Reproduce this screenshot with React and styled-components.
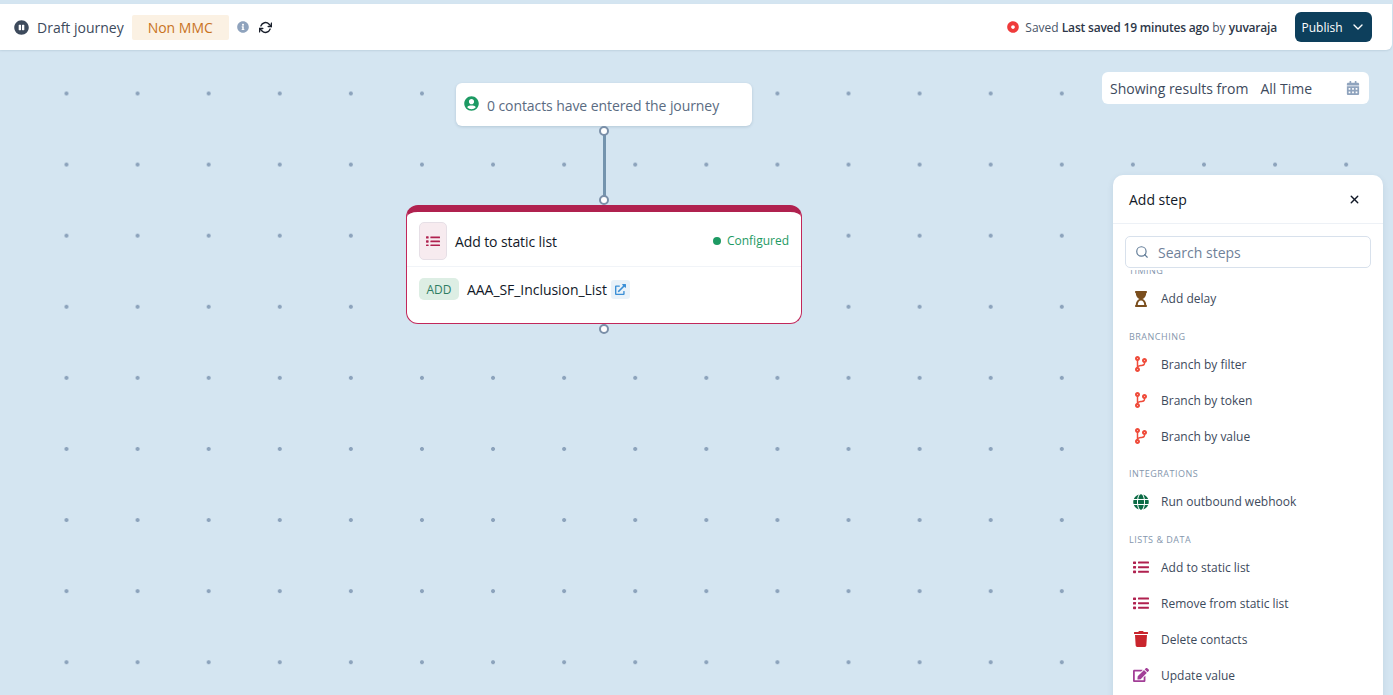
import React from 'react'
import styled, { createGlobalStyle } from 'styled-components'
import { FaPauseCircle, FaInfoCircle, FaDotCircle, FaUserCircle, FaCalendarAlt, FaHourglassStart, FaCodeBranch, FaGlobe, FaTrash, FaEdit, FaExternalLinkAlt } from 'react-icons/fa'
import { FiRefreshCw, FiSearch, FiX, FiChevronDown } from 'react-icons/fi'

const Global = createGlobalStyle`
html,body{
    margin:0;
    height:100%;
    overflow:hidden;
}
body{
    font-family:"Open Sans","Noto Sans",sans-serif;
    background:#D4E5F1;
}
`
const Page = styled.div`
    width:1393px;
    height:695px;
    padding-top:4px;
    box-sizing:border-box;
    display:flex;
    flex-direction:column;
    overflow:hidden;
    background:#D4E5F1;
`
const Header = styled.header`
    height:46px;
    width:1392px;
    flex:none;
    box-sizing:border-box;
    background:#fff;
    border-radius:0 0 6px 0;
    box-shadow:0 1px 2px rgba(40,70,100,.12);
    display:flex;
    align-items:center;
    padding:0 20px 0 14px;
    position:relative;
    z-index:2;
`
const PauseIcon = styled(FaPauseCircle)`
    font-size:15px;
    color:#3D4A5C;
    margin-right:8px;
`
const Title = styled.span`
    font-size:14px;
    color:#3D4A5C;
    margin-right:8px;
`
const Badge = styled.span`
    width:97px;
    height:25px;
    display:flex;
    align-items:center;
    justify-content:center;
    background:#FBF1E3;
    color:#C9731E;
    font-size:14px;
    border-radius:2px;
    margin-right:8px;
`
const InfoIcon = styled(FaInfoCircle)`
    font-size:12px;
    color:#8FA3BD;
    margin:0 10px 0 0;
`
const SyncIcon = styled(FiRefreshCw)`
    font-size:13px;
    stroke-width:2.7;
    color:#1A202C;
`
const Status = styled.div`
    margin-left:auto;
    display:flex;
    align-items:center;
    font-size:12px;
    color:#4A5568;
    white-space:pre;
    b{
        font-weight:600;
        color:#2D3748;
        letter-spacing:-.2px;
    }
`
const SavedIcon = styled(FaDotCircle)`
    font-size:12px;
    color:#EF3B3B;
    margin-right:6px;
`
const Publish = styled.button`
    width:77px;
    height:30px;
    margin-left:18px;
    border:0;
    border-radius:6px;
    background:#0D3F5C;
    color:#fff;
    font:500 12px "Open Sans",sans-serif;
    display:flex;
    align-items:center;
    justify-content:center;
    gap:7px;
    svg{
        font-size:16px;
    }
`
const Canvas = styled.main`
    flex:1;
    position:relative;
    background-color:#D4E5F1;
    background-image:radial-gradient(circle at center,#8CA3BC 0,#8CA3BC 1.6px,transparent 2.3px);
    background-size:71.1px 71.1px;
    background-position:30.95px 7.95px;
`
const Results = styled.div`
    position:absolute;
    left:1102px;
    top:22px;
    width:267px;
    height:32px;
    box-sizing:border-box;
    padding:0 9px 0 8px;
    background:#fff;
    border-radius:6px;
    display:flex;
    align-items:center;
    font-size:14px;
    color:#3D4A5C;
    span+span{
        margin-left:12px;
    }
    svg{
        margin-left:auto;
        font-size:14px;
        color:#8FA3BD;
    }
`
const ContactNode = styled.div`
    position:absolute;
    left:456px;
    top:33px;
    width:296px;
    height:43px;
    box-sizing:border-box;
    padding:2px 8px 0;
    background:#fff;
    border-radius:6px;
    box-shadow:0 1px 3px rgba(40,70,100,.18);
    display:flex;
    align-items:center;
    gap:8px;
    font-size:14px;
    letter-spacing:-.08px;
    color:#5A6B82;
    svg{
        font-size:15px;
        color:#1D9A63;
        margin-top:-5px;
    }
`
const Handle = styled.div`
    position:absolute;
    left:599px;
    top:${p => p.$top}px;
    width:10px;
    height:10px;
    box-sizing:border-box;
    border:2px solid #7A8FA8;
    border-radius:50%;
    background:#fff;
    z-index:1;
`
const Edge = styled.div`
    position:absolute;
    left:602.5px;
    top:85px;
    width:3px;
    height:62px;
    background:#7494AE;
`
const StepNode = styled.section`
    position:absolute;
    left:406px;
    top:155px;
    width:396px;
    height:119px;
    box-sizing:border-box;
    background:#fff;
    border:1px solid #C2275A;
    border-top:7px solid #B0214F;
    border-radius:12px;
    overflow:hidden;
`
const NodeHead = styled.div`
    height:55px;
    box-sizing:border-box;
    padding:10px 12px 0;
    border-bottom:1px solid #F1F4F8;
    display:flex;
    align-items:flex-start;
`
const NodeIcon = styled.div`
    width:28px;
    height:38px;
    box-sizing:border-box;
    background:#F7EBEF;
    border:1px solid #E6DFE6;
    border-radius:5px;
    display:flex;
    align-items:center;
    justify-content:center;
    margin-right:8px;
`
const NodeTitle = styled.span`
    font-size:14px;
    font-weight:500;
    letter-spacing:-.1px;
    color:#111827;
    line-height:40px;
`
const Configured = styled.span`
    margin-left:auto;
    font-size:12px;
    color:#1D9A63;
    line-height:38px;
    display:flex;
    align-items:center;
    gap:6px;
    &::before{
        content:"";
        width:8px;
        height:8px;
        border-radius:50%;
        background:#1D9A63;
    }
`
const NodeBody = styled.div`
    padding:11px 12px 0;
    display:flex;
    align-items:center;
`
const Pill = styled.span`
    width:40px;
    height:22px;
    background:#DDEEE4;
    color:#2E7D62;
    font-size:12px;
    border-radius:5px;
    display:flex;
    align-items:center;
    justify-content:center;
    margin-right:8px;
`
const ListName = styled.span`
    font-size:14px;
    font-weight:500;
    letter-spacing:-.05px;
    color:#111827;
    margin-right:4px;
    padding-top:1px;
`
const LinkBox = styled.span`
    width:19px;
    height:19px;
    background:#E9F2F9;
    border-radius:3px;
    display:flex;
    align-items:center;
    justify-content:center;
    color:#3B8FD6;
    font-size:11px;
`
const Panel = styled.aside`
    position:absolute;
    left:1113px;
    top:125px;
    width:270px;
    height:540px;
    background:#fff;
    border-radius:10px;
    box-shadow:0 2px 6px rgba(40,70,100,.1);
    display:flex;
    flex-direction:column;
    z-index:2;
`
const PanelHead = styled.div`
    height:49px;
    flex:none;
    box-sizing:border-box;
    border-bottom:1px solid #EDF1F6;
    padding:0 22px 0 16px;
    display:flex;
    align-items:center;
    justify-content:space-between;
    font-size:14px;
    font-weight:500;
    color:#111827;
    svg{
        font-size:13px;
        stroke-width:2.5;
    }
`
const Search = styled.div`
    margin:12px 12px 0 12px;
    height:32px;
    flex:none;
    box-sizing:border-box;
    border:1px solid #D8E1EC;
    border-radius:5px;
    display:flex;
    align-items:center;
    gap:9px;
    padding:0 9px;
    font-size:14px;
    color:#6F8199;
    svg{
        font-size:14px;
        color:#5F7A96;
    }
`
const StepScroll = styled.div`
    flex:1;
    margin-top:2px;
    overflow:hidden;
`
const StepList = styled.div`
    margin-top:-19px;
`
const GroupLabel = styled.div`
    height:29.6px;
    box-sizing:border-box;
    padding:14px 0 0 16px;
    font-size:9px;
    line-height:12px;
    letter-spacing:.5px;
    font-weight:500;
    color:#8496AD;
    text-transform:uppercase;
`
const Step = styled.div`
    height:36px;
    display:flex;
    align-items:center;
    padding-left:19px;
    font-size:12px;
    color:#3D4A5C;
`
const StepIcon = styled.span`
    width:18px;
    display:flex;
    justify-content:center;
    margin-right:11px;
    font-size:${p => p.$size || 16}px;
    color:${p => p.$color};
`
const ListSvg = styled.svg`
    display:block;
`

// font-awesome's list has round bullets, the one in the picture is small dashes and thick bars
const ListIcon = ({ width = 16, color = '#B0214F' }) => (
    <ListSvg width={width} height={width * 0.78} viewBox="0 0 16 12.5" fill={color}>
        <rect x="0" y="0.4" width="3" height="2.6" rx="0.6" />
        <rect x="0" y="5" width="3" height="2.6" rx="0.6" />
        <rect x="0" y="9.6" width="3" height="2.6" rx="0.6" />
        <rect x="5" y="0.6" width="11" height="2" rx="0.4" />
        <rect x="5" y="5.2" width="11" height="2" rx="0.4" />
        <rect x="5" y="9.8" width="11" height="2" rx="0.4" />
    </ListSvg>
)

const groups = [
    { label: 'Timing', steps: [{ name: 'Add delay', icon: FaHourglassStart, color: '#7A4E1D', size: 16 }] },
    {
        label: 'Branching', steps: [
            { name: 'Branch by filter', icon: FaCodeBranch, color: '#EF4B3A', size: 16 },
            { name: 'Branch by token', icon: FaCodeBranch, color: '#EF4B3A', size: 16 },
            { name: 'Branch by value', icon: FaCodeBranch, color: '#EF4B3A', size: 16 },
        ]
    },
    { label: 'Integrations', steps: [{ name: 'Run outbound webhook', icon: FaGlobe, color: '#0B6B45', size: 16 }] },
    {
        label: 'Lists & data', steps: [
            { name: 'Add to static list', icon: ListIcon, color: '#B0214F' },
            { name: 'Remove from static list', icon: ListIcon, color: '#B0214F' },
            { name: 'Delete contacts', icon: FaTrash, color: '#C9252D', size: 16 },
            { name: 'Update value', icon: FaEdit, color: '#A23E97', size: 16 },
        ]
    },
]

function App() {
    return (
        <Page>
            <Global />
            <Header>
                <PauseIcon />
                <Title>Draft journey</Title>
                <Badge>Non MMC</Badge>
                <InfoIcon />
                <SyncIcon />
                <Status>
                    <SavedIcon />
                    Saved <b>Last saved 19 minutes ago</b> by <b>yuvaraja</b>
                </Status>
                <Publish>Publish <FiChevronDown /></Publish>
            </Header>
            <Canvas>
                <Results>
                    <span>Showing results from</span>
                    <span>All Time</span>
                    <FaCalendarAlt />
                </Results>
                <ContactNode>
                    <FaUserCircle />
                    0 contacts have entered the journey
                </ContactNode>
                <Handle $top={76} />
                <Edge />
                <Handle $top={145} />
                <StepNode>
                    <NodeHead>
                        <NodeIcon><ListIcon width={14} /></NodeIcon>
                        <NodeTitle>Add to static list</NodeTitle>
                        <Configured>Configured</Configured>
                    </NodeHead>
                    <NodeBody>
                        <Pill>ADD</Pill>
                        <ListName>AAA_SF_Inclusion_List</ListName>
                        <LinkBox><FaExternalLinkAlt /></LinkBox>
                    </NodeBody>
                </StepNode>
                <Handle $top={274} />
                <Panel>
                    <PanelHead>Add step <FiX /></PanelHead>
                    <Search><FiSearch /> Search steps</Search>
                    <StepScroll>
                        <StepList>
                            {groups.map((g) => (
                                <div key={g.label}>
                                    <GroupLabel>{g.label}</GroupLabel>
                                    {g.steps.map((s) => (
                                        <Step key={s.name}>
                                            <StepIcon $color={s.color} $size={s.size}><s.icon /></StepIcon>
                                            {s.name}
                                        </Step>
                                    ))}
                                </div>
                            ))}
                        </StepList>
                    </StepScroll>
                </Panel>
            </Canvas>
        </Page>
    )
}

export default App
